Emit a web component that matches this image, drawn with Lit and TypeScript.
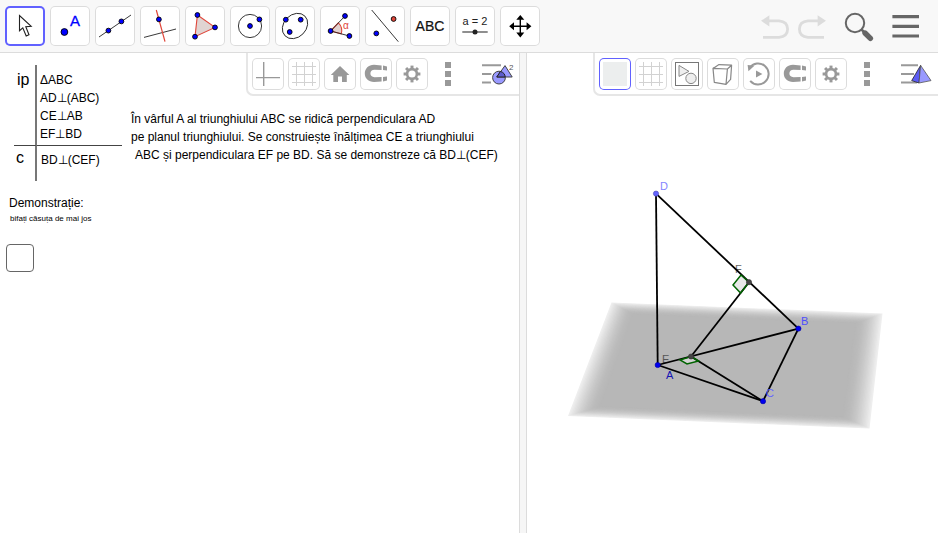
import { LitElement, html, svg, css, type TemplateResult } from "lit";
import { customElement, state } from "lit/decorators.js";
import { classMap } from "lit/directives/class-map.js";

type Pt = [number, number];

const dot = (x: number, y: number, r = 2.4, fill = "#0000ff") =>
  svg`<circle cx=${x} cy=${y} r=${r} fill=${fill} stroke="#000" stroke-width="0.9"></circle>`;

const gear = () => {
  const teeth = [0, 45, 90, 135, 180, 225, 270, 315];
  return svg`<circle cx="16" cy="16" r="4.9" fill="none" stroke="#999" stroke-width="2.6"></circle>
    ${teeth.map((a) => svg`<rect x="14.5" y="7.6" width="3" height="3.4" fill="#999" transform=${`rotate(${a} 16 16)`}></rect>`)}`;
};

const magnet = () => svg`
  <path d="M21.6 7.4L14 6.8C8.4 6.8 4.8 10.8 4.8 15.6C4.8 20.6 8.4 24 14 24L21.6 23.4V19L14.6 19.2C11.8 19.2 10.4 17.6 10.4 15.6C10.4 13.4 11.8 11.8 14.6 11.8L21.6 12Z" fill="#999"></path>
  <path d="M23 7.6L27 8.6V12.6L23 12.1ZM23 19L27 18.4V22.4L23 23.4Z" fill="#999"></path>`;

const gridLines = () =>
  svg`<path d="M8.5 4V28M16.5 4V28M24.5 4V28M4 8.5H28M4 16.5H28M4 24.5H28" stroke="#d2d2d2" fill="none"></path>`;

const TOOLS: { name: string; art: TemplateResult }[] = [
  {
    name: "Move",
    art: svg`<path d="M14.5 9.5V24.7L17.8 21.8L21.2 30L24 28.8L20.8 20.8L26.2 20.4Z" fill="#fff" stroke="#222" stroke-width="1.1"></path>`,
  },
  {
    name: "Point",
    art: svg`${dot(14.4, 26, 3.4)}<text x="20" y="20" font-size="15" fill="#0000ff" stroke="#0000ff" stroke-width="0.3">A</text>`,
  },
  {
    name: "Line",
    art: svg`<path d="M4 31L36 9" stroke="#222" stroke-width="0.9"></path>${dot(13.4, 24.6)}${dot(26.4, 15.4)}`,
  },
  {
    name: "Perpendicular line",
    art: svg`<path d="M4 31.4L36 23" stroke="#222" stroke-width="0.9"></path>
      <path d="M16.3 4L25 35.7" stroke="#e0463a" stroke-width="1.2"></path>${dot(18.9, 13.4)}`,
  },
  {
    name: "Polygon",
    art: svg`<path d="M12.4 9L30 21.4L10 30.7Z" fill="#e0d4d2" stroke="#e0463a" stroke-width="1.1"></path>
      ${dot(12.4, 9)}${dot(30, 21.4)}${dot(10, 30.7)}`,
  },
  {
    name: "Circle with center through point",
    art: svg`<circle cx="20" cy="20" r="11.6" fill="none" stroke="#222" stroke-width="0.9"></circle>${dot(20, 20)}${dot(29.4, 13.4)}`,
  },
  {
    name: "Ellipse",
    art: svg`<ellipse cx="20" cy="20" rx="14" ry="11.2" transform="rotate(-45 20 20)" fill="none" stroke="#222" stroke-width="0.9"></ellipse>
      ${dot(10.8, 13.7)}${dot(25.7, 13.7)}${dot(14.7, 26)}`,
  },
  {
    name: "Angle",
    art: svg`<path d="M10.6 25L18.4 16.8A11 11 0 0 1 21.2 27.8Z" fill="#e2d2d0" stroke="#e0463a" stroke-width="1.1"></path>
      <path d="M25 10L10.6 25L29.4 30" fill="none" stroke="#222" stroke-width="0.9"></path>
      <text x="23" y="23" font-size="10" fill="#e0463a">α</text>
      ${dot(10.6, 25)}${dot(25, 10)}${dot(29.4, 30)}`,
  },
  {
    name: "Reflect about line",
    art: svg`<path d="M6.7 4L33.3 35.7" stroke="#222" stroke-width="0.9"></path>${dot(11.3, 27.4)}${dot(28.6, 13, 2.4, "#e0463a")}`,
  },
  {
    name: "Text",
    art: svg`<text x="20" y="25" font-size="14" text-anchor="middle" fill="#111" stroke="#111" stroke-width="0.2">ABC</text>`,
  },
  {
    name: "Slider",
    art: svg`<text x="20" y="19" font-size="11" text-anchor="middle" fill="#222">a = 2</text>
      <path d="M7.3 26H32.7" stroke="#444" stroke-width="1.2"></path><circle cx="20" cy="26" r="2.5" fill="#222"></circle>`,
  },
  {
    name: "Move graphics view",
    art: svg`<path d="M12 20.2H28M20.3 12V28" stroke="#000" stroke-width="1.4"></path>
      <path d="M20.3 9L24.3 13.8H16.3ZM20.3 31.4L24.3 26.6H16.3ZM9.2 20.2L14 16.2V24.2ZM31.4 20.2L26.6 16.2V24.2Z" fill="#000"></path>`,
  },
];

type Small = { name: string; art: TemplateResult; active?: boolean };

const BAR_2D: Small[] = [
  { name: "Axes", art: svg`<path d="M11.7 4V28M4 19.6H28" stroke="#999" stroke-width="1.4"></path>` },
  { name: "Grid", art: gridLines() },
  { name: "Standard view", art: svg`<path d="M16 8L25.4 17H22.8V24H18V18.4H14V24H9.3V17H6.8Z" fill="#999"></path>` },
  { name: "Snap to grid", art: magnet() },
  { name: "Settings", art: gear() },
];

const BAR_3D: Small[] = [
  { name: "Plane", active: true, art: svg`<rect x="4" y="4" width="24" height="24" fill="#eceeee"></rect>` },
  { name: "Grid", art: gridLines() },
  {
    name: "Clipping",
    art: svg`<rect x="4.5" y="4.5" width="23" height="23" fill="none" stroke="#777"></rect>
      <path d="M8 7.4L18 13.4L8 18.4Z" fill="#eee" stroke="#888"></path><circle cx="20" cy="20.4" r="5.2" fill="#eee" stroke="#888"></circle>`,
  },
  {
    name: "View direction",
    art: svg`<path d="M6 10.4L20.4 11L19 26.4L7.3 24.4ZM6 10.4L12 6.6L24.6 7.2L20.4 11M24.6 7.2L23.6 21.4L19 26.4" fill="none" stroke="#888" stroke-width="1.2" stroke-linejoin="round"></path>`,
  },
  {
    name: "Rotate view",
    art: svg`<path d="M6.6 9.8A10.5 10.5 0 1 1 7.2 22.8" fill="none" stroke="#999" stroke-width="2"></path>
      <path d="M4.6 7L11.4 7.8L5.4 13.2Z" fill="#999"></path><path d="M13 12.6L19.4 16L13 19.6Z" fill="#999"></path>`,
  },
  { name: "Snap to grid", art: magnet() },
  { name: "Settings", art: gear() },
];

const ALGEBRA_2D = svg`
  <path d="M2 7.2H21M2 16H11.4M2 24.6H11" stroke="#999" stroke-width="2"></path>
  <circle cx="19" cy="19.6" r="6.4" fill="#9999ff" stroke="#444"></circle>
  <path d="M25 7.6L32.2 19H16.8Z" fill="#9999ff" stroke="#444"></path>
  <path d="M16.8 19L20.4 13.4Q25 14.8 25.2 19Z" fill="#5c5ccc" stroke="#222"></path>
  <text x="29" y="12" font-size="8" fill="#555">2</text>`;

const ALGEBRA_3D = svg`
  <path d="M2 7.2H19M2 16H15M2 24.6H18" stroke="#999" stroke-width="2"></path>
  <path d="M21.6 7.4L12.7 22.6L20 25Z" fill="#5c5cf5" stroke="#222" stroke-width="0.8"></path>
  <path d="M21.6 7.4L20 25L32 22.6Z" fill="#9999ff" stroke="#555" stroke-width="0.8"></path>`;

/* Drawing plane: a bilinear patch shaded from its faint rim to its solid middle. */
const CORNERS: [Pt, Pt, Pt, Pt] = [[84.5, 206.5], [355.5, 217.5], [342.5, 332.5], [41, 320]];
const STEPS = 20;
const at = (u: number, v: number): string => {
  const [a, b, c, d] = CORNERS;
  const mix = (i: 0 | 1) =>
    a[i] * (1 - u) * (1 - v) + b[i] * u * (1 - v) + c[i] * u * v + d[i] * (1 - u) * v;
  return `${mix(0).toFixed(2)},${mix(1).toFixed(2)}`;
};
const planeLayers = Array.from({ length: STEPS + 1 }, (_, i) => {
  const t = i / STEPS;
  const k = t * 0.095;
  const g = Math.round(238 - 55 * Math.sin((t * Math.PI) / 2));
  return svg`<polygon points=${[at(k, k), at(1 - k, k), at(1 - k, 1 - k), at(k, 1 - k)].join(" ")} fill=${`rgb(${g},${g},${g})`}></polygon>`;
});

const P: Record<string, Pt> = {
  A: [130.7, 269], B: [271.4, 232.6], C: [236, 305.2], D: [129, 97.6], E: [164, 260.5], F: [222, 186.2],
};
const EDGES = ["AD", "DB", "AB", "AC", "BC", "CE", "EF"];
const LABELS: [string, number, number, string][] = [
  ["D", 133, 94, "#8484ff"],
  ["B", 274, 229, "#4d4dff"],
  ["A", 139, 283, "#1414b4"],
  ["C", 239, 301, "#6464ff"],
  ["E", 135, 267, "#555"],
  ["F", 208, 177, "#666"],
];

@customElement("app-root")
export class AppRoot extends LitElement {
  @state() private tool = 0;

  static styles = css`
    :host {
      display: flex;
      flex-direction: column;
      box-sizing: border-box;
      min-height: 100vh;
      padding: 0 2px 2px 0;
      background: #fff;
      color: #000;
      font: 12px/18px "Liberation Sans", Arial, sans-serif;
    }
    svg { display: block; font-family: "Liberation Sans", Arial, sans-serif; }
    button {
      display: block;
      flex: none;
      padding: 0;
      border: 0;
      background: none;
      cursor: pointer;
    }
    .top {
      display: flex;
      align-items: center;
      justify-content: space-between;
      height: 52px;
      border-bottom: 1px solid #dcdcdc;
      background: #f8f8f8;
    }
    .tools { display: flex; gap: 5px; padding-left: 5px; }
    .tool, .small {
      border-radius: 5px;
      background: #fff;
      box-shadow: inset 0 0 0 1px #dcdcdc;
    }
    .tool.on { box-shadow: inset 0 0 0 2px #6161ff; }
    .small.on { box-shadow: inset 0 0 0 1px #6161ff; }
    .actions { display: flex; padding-right: 9px; }
    .find { margin-left: 8px; }
    .views {
      flex: 1;
      display: grid;
      grid-template-columns: minmax(0, 519fr) 8px minmax(0, 411fr);
    }
    .splitter {
      border: solid #dcdcdc;
      border-width: 0 1px;
      background: #f6f6f6;
    }
    .bar {
      display: flex;
      gap: 4px;
      width: max-content;
      margin-left: auto;
      padding: 5px 3px 4px 4px;
      border: solid #e6e6e6;
      border-width: 0 0 2px 2px;
      border-bottom-left-radius: 7px;
      background: #fff;
    }
    .algebra { margin-left: 12px; }
    .sheet {
      display: grid;
      grid-template-columns: 131px minmax(0, 1fr);
      align-content: start;
    }
    .given {
      width: 108px;
      margin: 12px 0 0 14px;
      border-spacing: 0;
    }
    .given th {
      width: 18px;
      padding: 0 0 0 3px;
      border-right: 2px solid #777;
      font-size: 16px;
      font-weight: 400;
      text-align: left;
      vertical-align: top;
    }
    .given td { padding: 0 0 0 3px; vertical-align: top; }
    .hyp > * { border-bottom: 1px solid #444; }
    .given .hyp th { padding-top: 6px; }
    .given .hyp td { padding-top: 6px; padding-bottom: 2px; }
    .given .goal th { padding: 3px 0 0 2px; }
    .given .goal td { padding: 5px 0 12px 4px; }
    .row { display: block; white-space: nowrap; }
    .problem { margin: 14px 0 0; }
    .indent { padding-left: 4px; }
    .proof { grid-column: 1 / -1; padding: 13px 0 0 9px; }
    .hint { display: block; padding-left: 1px; font-size: 8px; line-height: 14px; }
    .proof input {
      appearance: none;
      display: block;
      width: 28px;
      height: 28px;
      margin: 18px 0 0 -3px;
      border: 1px solid #666;
      border-radius: 4px;
      background: #fff;
    }
    .proof input:checked { background: #6161ff; }
    .space { display: flex; flex-direction: column; }
    .scene { flex: 1; width: 100%; min-height: 0; }
  `;

  private icon(size: number, art: unknown, width = size) {
    return html`<svg width=${width} height=${size} viewBox=${`0 0 ${width} ${size}`} aria-hidden="true">${art}</svg>`;
  }

  private bar(label: string, items: Small[], algebra: unknown) {
    return html`<div class="bar" role="toolbar" aria-label=${label}>
      ${items.map(
        (b) => html`<button class=${classMap({ small: true, on: !!b.active })} aria-label=${b.name}>${this.icon(32, b.art)}</button>`,
      )}
      <button aria-label="More">
        ${this.icon(32, svg`<path d="M13 4h6v6h-6zM13 13h6v6h-6zM13 22h6v6h-6z" fill="#999"></path>`)}
      </button>
      <button class="algebra" aria-label="Style bar">${this.icon(32, algebra, 36)}</button>
    </div>`;
  }

  render() {
    return html`
      <header class="top">
        <div class="tools" role="toolbar" aria-label="Tools">
          ${TOOLS.map(
            (t, i) => html`<button
              class=${classMap({ tool: true, on: i === this.tool })}
              aria-label=${t.name}
              @click=${() => (this.tool = i)}
            >${this.icon(40, t.art)}</button>`,
          )}
        </div>
        <div class="actions">
          <button aria-label="Undo">${this.icon(40, svg`
            <path d="M11 14.8H22Q30.6 15.6 30.6 23T22 31.4H6" fill="none" stroke="#dcdcdc" stroke-width="2.8"></path>
            <path d="M4 14.8L12.4 9.2V20.4Z" fill="#dcdcdc"></path>`, 36)}</button>
          <button aria-label="Redo">${this.icon(40, svg`
            <path d="M25 14.8H15Q6.4 15.6 6.4 23T15 31.4H31" fill="none" stroke="#dcdcdc" stroke-width="2.8"></path>
            <path d="M33 14.8L24.6 9.2V20.4Z" fill="#dcdcdc"></path>`, 36)}</button>
          <button class="find" aria-label="Search">${this.icon(40, svg`
            <circle cx="18" cy="17" r="9.2" fill="none" stroke="#666" stroke-width="2"></circle>
            <path d="M24.4 23.4L28 27" stroke="#666" stroke-width="2.6"></path>
            <path d="M28 27L33.4 32.4" stroke="#666" stroke-width="5.4" stroke-linecap="round"></path>`, 44)}</button>
          <button aria-label="Menu">${this.icon(40, svg`
            <path d="M11.4 10.6H38M11.4 20.4H38M11.4 30H38" stroke="#666" stroke-width="3.2"></path>`, 48)}</button>
        </div>
      </header>
      <main class="views">
        <section class="sheet" aria-label="Graphics">
          <table class="given">
            <tr class="hyp">
              <th scope="row">ip</th>
              <td>
                <span class="row">ΔABC</span><span class="row">AD⊥(ABC)</span>
                <span class="row">CE⊥AB</span><span class="row">EF⊥BD</span>
              </td>
            </tr>
            <tr class="goal"><th scope="row">c</th><td>BD⊥(CEF)</td></tr>
          </table>
          <div>
            ${this.bar("Graphics view", BAR_2D, ALGEBRA_2D)}
            <p class="problem">
              <span class="row">În vârful A al triunghiului ABC se ridică perpendiculara AD</span>
              <span class="row">pe planul triunghiului. Se construiește înălțimea CE a triunghiului</span>
              <span class="row indent">ABC și perpendiculara EF pe BD. Să se demonstreze că BD⊥(CEF)</span>
            </p>
          </div>
          <div class="proof">
            <label for="proof">Demonstrație:<span class="hint">bifați căsuța de mai jos</span></label>
            <input id="proof" type="checkbox" />
          </div>
        </section>
        <div class="splitter" role="separator"></div>
        <section class="space" aria-label="3D Graphics">
          ${this.bar("3D Graphics view", BAR_3D, ALGEBRA_3D)}
          <svg class="scene" viewBox="0 0 411 437" role="img" aria-label="Tetraedrul ABCD">
            ${planeLayers}
            <g font-size="11">
              ${LABELS.filter((l) => l[0] === "E" || l[0] === "F").map(
                ([t, x, y, c]) => svg`<text x=${x} y=${y} fill=${c}>${t}</text>`,
              )}
            </g>
            <path d="M222 186.2L214 179L206 189L213.6 197Z" fill="#e8e8e8"></path>
            <path d="M164 260.5L171.6 265L160 268L153 264Z" fill="#d4d4d4"></path>
            ${EDGES.map(
              (e) => svg`<line x1=${P[e[0]][0]} y1=${P[e[0]][1]} x2=${P[e[1]][0]} y2=${P[e[1]][1]} stroke="#000" stroke-width="1.8"></line>`,
            )}
            <path d="M222 186.2L214 179L206 189L213.6 197Z" fill="none" stroke="#006400" stroke-width="1.5"></path>
            <path d="M164 260.5L171.6 265L160 268L153 264Z" fill="none" stroke="#006400" stroke-width="1.5"></path>
            ${Object.entries(P).map(([n, [x, y]]) => svg`<circle cx=${x} cy=${y} r="2.6"
              fill=${n === "D" ? "#6464ff" : n === "E" || n === "F" ? "#444" : "#0000f0"}
              stroke=${n === "D" ? "#4848b0" : n === "E" || n === "F" ? "#333" : "#0000a0"} stroke-width="0.6"></circle>`)}
            <g font-size="11">
              ${LABELS.filter((l) => l[0] !== "E" && l[0] !== "F").map(
                ([t, x, y, c]) => svg`<text x=${x} y=${y} fill=${c}>${t}</text>`,
              )}
            </g>
          </svg>
        </section>
      </main>
    `;
  }
}
